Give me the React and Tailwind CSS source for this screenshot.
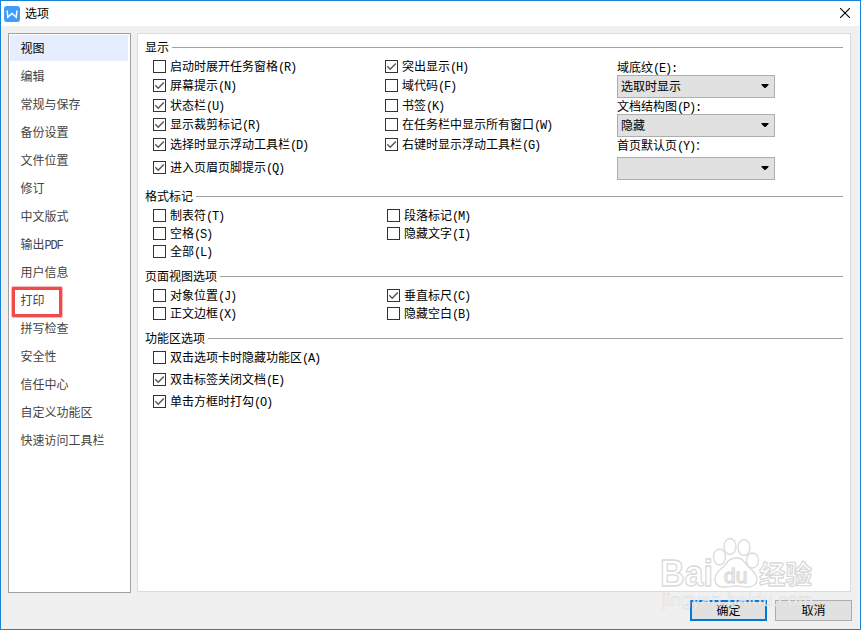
import React, { useState } from 'react';

const menu = [
  '视图', '编辑', '常规与保存', '备份设置', '文件位置', '修订', '中文版式', '输出PDF',
  '用户信息', '打印', '拼写检查', '安全性', '信任中心', '自定义功能区', '快速访问工具栏',
];

const groups = [
  {
    title: '显示',
    height: 'h-[149px]',
    indent: 'w-[232px]',
    rows: 'grid-rows-[19px_20px_19px_20px_23px_13px]',
    left: [
      ['启动时展开任务窗格(R)', false],
      ['屏幕提示(N)', true],
      ['状态栏(U)', true],
      ['显示裁剪标记(R)', true],
      ['选择时显示浮动工具栏(D)', true],
      ['进入页眉页脚提示(Q)', true],
    ],
    right: [
      ['突出显示(H)', true],
      ['域代码(F)', false],
      ['书签(K)', false],
      ['在任务栏中显示所有窗口(W)', false],
      ['右键时显示浮动工具栏(G)', true],
    ],
  },
  {
    title: '格式标记',
    height: 'h-20',
    indent: 'w-[234px]',
    rows: 'grid-rows-[18px_18px_13px]',
    left: [['制表符(T)', false], ['空格(S)', false], ['全部(L)', false]],
    right: [['段落标记(M)', false], ['隐藏文字(I)', false]],
  },
  {
    title: '页面视图选项',
    height: 'h-[62px]',
    indent: 'w-[234px]',
    rows: 'grid-rows-[18px_13px]',
    left: [['对象位置(J)', false], ['正文边框(X)', false]],
    right: [['垂直标尺(C)', true], ['隐藏空白(B)', false]],
  },
  {
    title: '功能区选项',
    height: 'h-20',
    indent: 'w-[234px]',
    rows: 'grid-rows-[22px_22px_13px]',
    left: [['双击选项卡时隐藏功能区(A)', false], ['双击标签关闭文档(E)', true], ['单击方框时打勾(O)', true]],
    right: [],
  },
];

const combos = [
  { label: '域底纹(E):', value: '选取时显示', box: 'mb-px' },
  { label: '文档结构图(P):', value: '隐藏', box: 'mb-px' },
  { label: '首页默认页(Y)：', value: '', box: 'mt-1' },
];

// Latin letters take half of a full-width cell
const Label = ({ children }) => (
  <span className="whitespace-pre">
    {children.split(/([\x20-\x7e]+)/).map((part, i) =>
      i % 2 ? (
        <span key={i} className="font-['Liberation_Mono',monospace] tracking-[-1.2px]">{part}</span>
      ) : (
        part
      )
    )}
  </span>
);

const Check = ({ text, initial }) => {
  const [on, setOn] = useState(initial);
  return (
    <div className="flex h-[13px] items-start gap-[4px] leading-[15px]" onClick={() => setOn(!on)}>
      <span className="h-[13px] w-[13px] shrink-0 border border-[#333] bg-white">
        {on && (
          <svg viewBox="0 0 11 11" className="block h-[11px] w-[11px]" fill="none" stroke="#555" strokeWidth="1.4">
            <path d="M1.3 5.3 4.2 8.2 9.8 2.4" />
          </svg>
        )}
      </span>
      <Label>{text}</Label>
    </div>
  );
};

const Combo = ({ label, value, box }) => (
  <div>
    <div className="h-[15px] leading-[16px]"><Label>{label}</Label></div>
    <div className={`flex h-[23px] w-[158px] items-start justify-between border border-[#adadad] bg-[#e1e1e1] pl-[3px] pr-[5px] ${box}`}>
      <span className="leading-[23px]">{value}</span>
      <svg className="mt-2" width="8" height="5" viewBox="0 0 8 5"><path d="M.5 0h7v1L4.500 4h-1L.5 1z" fill="#000" /></svg>
    </div>
  </div>
);

const Group = ({ group, children }) => (
  <section className={group.height}>
    <div className="flex h-[15px] items-start gap-[3px] leading-[17px]">
      <h2>{group.title}</h2>
      <div className="mt-[7px] h-px flex-1 bg-[#a0a0a0]" />
    </div>
    <div className="flex pl-2 pt-[5px]">
      <div className={`grid shrink-0 content-start ${group.rows} ${group.indent}`}>
        {group.left.map(([text, on]) => <Check key={text} text={text} initial={on} />)}
      </div>
      <div className={`grid w-[232px] shrink-0 content-start ${group.rows}`}>
        {group.right.map(([text, on]) => <Check key={text} text={text} initial={on} />)}
      </div>
      {children}
    </div>
  </section>
);

const Watermark = () => (
  <svg className="pointer-events-none absolute left-[655px] top-[529px]" width="164" height="84" viewBox="0 0 164 84">
    <g fill="#fff" stroke="#dadada" strokeWidth="1.300" strokeLinejoin="round">
      <text x="4" y="56" fontSize="36" fontWeight="700" fontFamily="Liberation Sans, sans-serif" textLength="53" lengthAdjust="spacingAndGlyphs">Bai</text>
      <ellipse cx="63.500" cy="27" rx="6" ry="8" />
      <ellipse cx="74" cy="16.500" rx="6" ry="8" />
      <ellipse cx="88" cy="17.500" rx="6" ry="8" />
      <ellipse cx="96.500" cy="30.500" rx="6" ry="7.500" />
      <path d="M80 28c-6 0-8 3-11 7s-10 7-10 14 4 8 10 8 7-1 11-1 6 1 11 1 10-2 10-8-6-9-10-14-5-7-11-7z" />
      <text x="68" y="53" fontSize="21" fontFamily="Liberation Sans, sans-serif">du</text>
      <text x="103" y="54" fontSize="26.500" fontWeight="700" fontFamily="Noto Sans CJK SC, sans-serif">经验</text>
    </g>
    <text x="6" y="76" fontSize="18" fill="#fff" fillOpacity="0.8" stroke="#d2d2d2" strokeOpacity="0.7" strokeWidth="0.700" fontFamily="Liberation Sans, sans-serif" textLength="151">jingyan.baidu.com</text>
  </svg>
);

const App = () => {
  const [selected, setSelected] = useState(0);

  return (
    <div className="relative flex h-[630px] w-[861px] flex-col border border-[#1883d7] bg-[#f0f0f0] font-['Liberation_Sans','Noto_Sans_CJK_SC',sans-serif] text-xs text-black">
      {/* Title bar */}
      <header className="flex h-[25px] shrink-0 items-center bg-white pl-[3px] pr-[10px]">
        <svg width="16" height="16" viewBox="0 0 16 16">
          <rect width="16" height="16" rx="3" fill="#3f9dfb" />
          <path d="M3.200 4.500 3.800 11.200 8 7.500l4.300 3.700.6-6.700" fill="none" stroke="#fff" strokeWidth="1.500" />
        </svg>
        <h1 className="ml-[5px] flex-1 leading-[14px]">选项</h1>
        <svg className="mb-px" width="10" height="10" viewBox="0 0 10 10" stroke="#000" strokeWidth="1.100">
          <path d="M0 0l10 10M10 0L0 10" />
        </svg>
      </header>

      <main className="flex flex-1 items-start gap-[6px] pl-[7px] pt-[7px]">
        {/* Categories */}
        <nav className="flex h-[560px] w-[123px] flex-col gap-[2px] border border-[#a0a0a0] bg-white p-px pr-[2px] text-[#444]">
          {menu.map((item, i) => (
            <div
              key={item}
              onClick={() => setSelected(i)}
              className={`relative h-[26px] shrink-0 pl-[10.5px] leading-[28px] ${i === selected ? 'bg-[#e5edff] text-black' : ''}`}
            >
              <Label>{item}</Label>
              {item === '打印' && (
                <span className="absolute left-[2px] top-0 h-[30px] w-[50px] rounded-[1px] border-[3px] border-[#ef4b4b] ring-1 ring-[#ef4b4b]/40" />
              )}
            </div>
          ))}
        </nav>

        {/* Options of the category */}
        <div className="h-[559px] w-[714px] border border-[#dcdcdc] bg-white pl-[7px] pr-[7px] pt-[6px]">
          {groups.map((group, i) => (
            <Group key={group.title} group={group}>
              {i === 0 && (
                <div>
                  {combos.map((c) => <Combo key={c.label} {...c} />)}
                </div>
              )}
            </Group>
          ))}
        </div>
      </main>

      <footer className="flex h-[29px] shrink-0 justify-end gap-2 pr-2">
        <button className="h-[21px] w-[77px] border-2 border-[#0078d7] bg-[#e1e1e1] leading-[18px]">确定</button>
        <button className="h-[21px] w-[77px] border border-[#adadad] bg-[#e1e1e1] leading-[20px]">取消</button>
      </footer>

      <Watermark />
    </div>
  );
};

export default App;
